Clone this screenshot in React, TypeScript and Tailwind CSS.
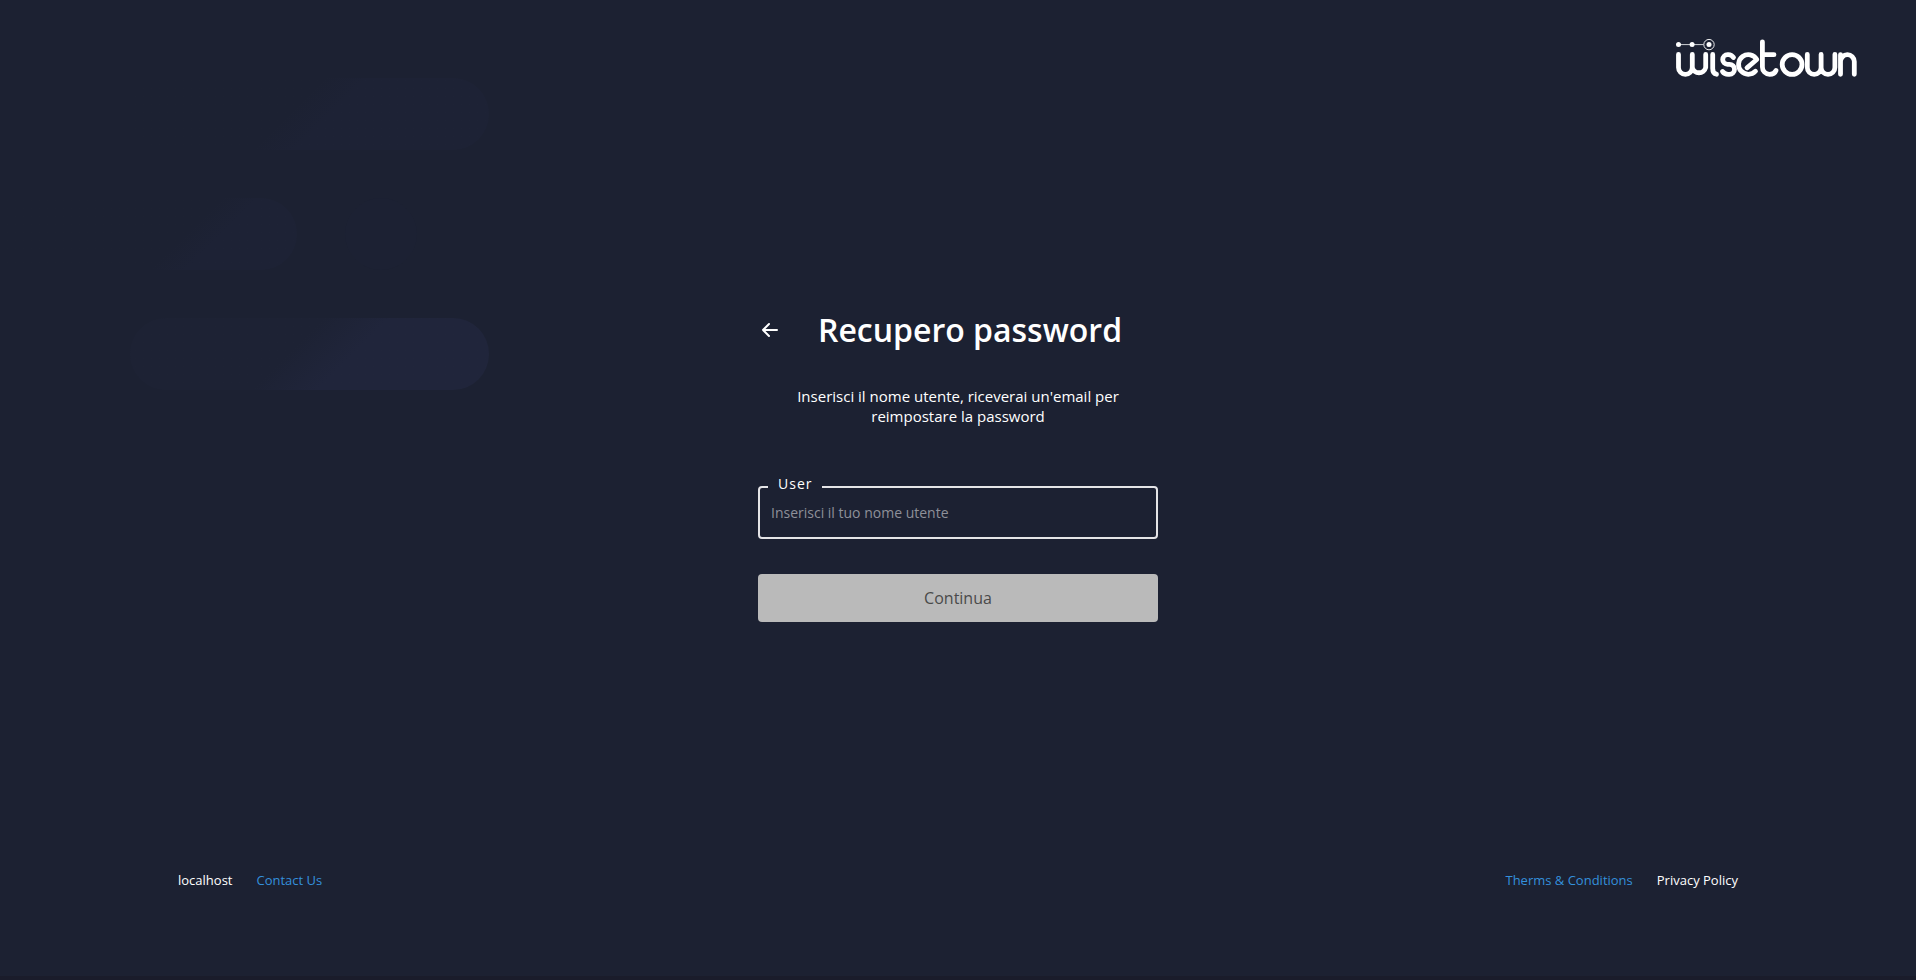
import { useState } from 'react';

// Rounded strokes, one path per letter
const LOGO_STROKES = [
    'M18.500 34.500V47.500a6.900 6.900 0 0 0 13.800 0V34.500M32.300 47.500a6.900 6.900 0 0 0 13.400 0V34.500',
    'M52.700 34.500V48.500Q52.700 53.500 56.500 54.200',
    'M73.500 37.500Q71.500 34.700 68.500 34.700H67.500a4.800 4.800 0 0 0 0 9.600h2a5 5 0 0 1 0 10H68Q64.500 54.300 62.500 51.500',
    'M87 47.800L96.800 39.500A9.800 9.800 0 1 0 95.500 51.200',
    'M102.400 21.800V47a7.200 7.200 0 0 0 7.200 7.300Q114.500 54.300 116 50.500M102.400 34.700H114',
    'M142 44.500a9.900 9.900 0 1 1-19.800 0a9.900 9.900 0 1 1 19.800 0',
    'M147.300 34.500V47.500a6.900 6.900 0 0 0 13.800 0V34.500M161.100 47.500a6.900 6.900 0 0 0 13.800 0V34.500',
    'M180.500 54.300V34.700M180.500 41.600a6.900 6.900 0 0 1 13.800 0V54.300',
];

function Logo() {
    return (
        <svg width="186" height="44" viewBox="14 16 186 44" fill="none" role="img" aria-label="wisetown">
            <g stroke="#fff" strokeWidth="4.800" strokeLinecap="round" strokeLinejoin="round">
                {LOGO_STROKES.map((d) => (
                    <path key={d} d={d} />
                ))}
            </g>
            <path d="M18.300 24.600H43.500" stroke="#fff" strokeWidth="0.800" />
            <circle cx="49" cy="24.600" r="5.200" stroke="#fff" strokeWidth="0.900" />
            <circle cx="18.500" cy="24.600" r="2.500" fill="#fff" />
            <circle cx="32.100" cy="24.600" r="2.500" fill="#fff" />
            <circle cx="49" cy="24.600" r="2.500" fill="#fff" />
        </svg>
    );
}

function Backdrop() {
    return (
        <div aria-hidden="true" className="pointer-events-none absolute left-0 top-0 w-[489px] overflow-hidden">
            <div className="mt-[78px] ml-[130px] h-[72px] rounded-full bg-linear-135 from-[#1c2132] from-45% to-[#1d2235] to-55%" />
            <div className="mt-12 flex gap-12">
                <div className="h-[72px] w-[297px] rounded-r-full bg-linear-135 from-[#1c2132] from-60% to-[#1d2235] to-70%" />
                <div className="size-[72px] rounded-full bg-[#1c2133]" />
            </div>
            <div className="mt-12 ml-[130px] h-[72px] rounded-full bg-linear-135 from-[#1d2234] from-45% to-[#20253b] to-60%" />
        </div>
    );
}

export default function App() {
    const [user, setUser] = useState('');

    return (
        <div className="relative flex min-h-screen flex-col border-b-4 border-[#1a1c2b] bg-[#1c2132] font-['Open_Sans',sans-serif] text-white">
            <Backdrop />
            <header className="relative flex justify-end px-14 pt-9">
                <Logo />
            </header>
            <main className="relative mx-auto mt-[226px] w-full max-w-[400px] flex-1">
                <div className="flex items-center">
                    <button type="button" aria-label="Indietro" className="flex size-6 items-center justify-center">
                        <svg width="24" height="24" viewBox="0 0 24 24" fill="none" stroke="currentColor" strokeWidth="2" strokeLinecap="round" strokeLinejoin="round">
                            <path d="M19 12H5M11 6l-6 6 6 6" />
                        </svg>
                    </button>
                    <h1 className="flex-1 text-center text-[32px] leading-[48px] font-semibold">Recupero password</h1>
                </div>
                <p className="mt-8 px-6 text-center text-[15px] leading-5">
                    Inserisci il nome utente, riceverai un'email per reimpostare la password
                </p>
                <form onSubmit={(e) => e.preventDefault()}>
                    <div className="relative mt-[60px]">
                        <label htmlFor="user" className="absolute -top-3 left-[10px] bg-[#1c2132] px-[10px] text-sm leading-5 tracking-[1px]">
                            User
                        </label>
                        <input
                            id="user"
                            value={user}
                            onChange={(e) => setUser(e.target.value)}
                            placeholder="Inserisci il tuo nome utente"
                            className="h-[53px] w-full rounded border-2 border-[#e4e4e7] px-[11px] text-sm outline-none placeholder:text-[#8e9099]"
                        />
                    </div>
                    <button type="submit" disabled={!user} className="mt-[35px] h-12 w-full rounded bg-[#bababa] text-base text-[#4a4a4a]">
                        Continua
                    </button>
                </form>
            </main>
            <footer className="relative flex justify-between px-[178px] pb-[86px] text-[13px] leading-5">
                <div className="flex gap-6">
                    <span>localhost</span>
                    <a href="#contact" className="text-[#3490dc]">Contact Us</a>
                </div>
                <div className="flex gap-6">
                    <a href="#terms" className="text-[#3490dc]">Therms &amp; Conditions</a>
                    <a href="#privacy">Privacy Policy</a>
                </div>
            </footer>
        </div>
    );
}
